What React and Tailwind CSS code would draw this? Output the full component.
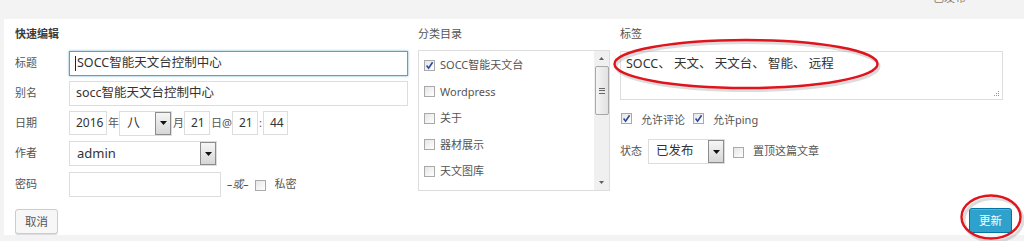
import React from "react"

const FONT = { fontFamily: '"Noto Sans", "Noto Sans CJK SC", sans-serif' }

const Checkbox = ({ checked }) => (
  <span className="relative inline-block w-[11px] h-[11px] shrink-0 border border-[#a9a9a9] bg-gradient-to-br from-[#e6e6e6] to-white">
    {checked && (
      <svg viewBox="0 0 11 11" className="absolute -left-px -top-px w-[11px] h-[11px]">
        <path d="M2.6 5.6 L4.6 8.2 L8.6 2.2" fill="none" stroke="#2b4a9a" strokeWidth="1.6" />
      </svg>
    )}
  </span>
)

const DropBtn = () => (
  <span className="flex items-center justify-center w-[16px] self-stretch border border-[#8c8c8c] bg-gradient-to-b from-[#f6f6f6] to-[#d6d6d6]">
    <svg viewBox="0 0 7 4" className="w-[7px] h-[4px]">
      <path d="M0 0 H7 L3.5 4 Z" fill="#111" />
    </svg>
  </span>
)

const Select = ({ value, className, textClass = "text-[13px]" }) => (
  <div className={`flex h-[25px] border border-[#ddd] bg-white ${className}`}>
    <span className={`flex-1 flex items-center pl-[7px] text-[#333] ${textClass}`}>{value}</span>
    <DropBtn />
  </div>
)

const Input = ({ value, className }) => (
  <div className={`flex items-center h-[24px] border border-[#ddd] bg-white px-[6px] text-[12px] text-[#333] ${className}`}>
    {value}
  </div>
)

const Label = ({ children }) => (
  <span className="w-[54px] shrink-0 text-[11px] text-[#555]">{children}</span>
)

const categories = [
  { name: "SOCC智能天文台", checked: true },
  { name: "Wordpress" },
  { name: "关于" },
  { name: "器材展示" },
  { name: "天文图库" },
]

export default function App() {
  return (
    <div className="relative w-[1024px] h-[241px] overflow-hidden bg-[#f3f3f3]" style={FONT}>
      {/* top strip with cut off status */}
      <div className="h-[19px] relative overflow-hidden">
        <span className="absolute left-[933px] top-[-10px] text-[11px] text-[#8a7a6a]">已发布</span>
      </div>

      <div className="ml-[4px] h-[216px] bg-white flex pl-[11px] pt-[7px]">
        {/* left column */}
        <div className="w-[393px] flex flex-col">
          <div className="h-[16px] leading-[16px] text-[11px] font-bold text-[#3c3c3c]">快速编辑</div>
          <div className="mt-[9px] flex items-center h-[25px]">
            <Label>标题</Label>
            <div className="flex items-center h-[25px] w-[339px] border border-[#5b9dd9] shadow-[0_0_2px_rgba(30,140,190,0.7)] pl-[5px] text-[12.5px] text-[#333]">
              <span className="w-px h-[15px] bg-[#222] mr-px"></span>SOCC智能天文台控制中心
            </div>
          </div>
          <div className="mt-[5px] flex items-center h-[25px]">
            <Label>别名</Label>
            <div className="flex items-center h-[25px] w-[339px] border border-[#ddd] pl-[6px] text-[12.5px] text-[#333]">
              socc智能天文台控制中心
            </div>
          </div>
          <div className="mt-[5px] flex items-center h-[24px] text-[11px] text-[#555] whitespace-nowrap">
            <Label>日期</Label>
            <Input value="2016" className="w-[38px]" />
            <span className="w-[12px] pl-[1px]">年</span>
            <Select value="八" className="w-[53px] h-[24px]" textClass="text-[13px]" />
            <span className="w-[12px] pl-px">月</span>
            <Input value="21" className="w-[26px]" />
            <span className="w-[22px] pl-px">日@</span>
            <Input value="21" className="w-[26px]" />
            <span className="w-[3px] text-center mx-px">:</span>
            <Input value="44" className="w-[25px]" />
          </div>
          <div className="mt-[6px] flex items-center h-[25px]">
            <Label>作者</Label>
            <Select value="admin" className="w-[148px]" textClass="text-[13px]" />
          </div>
          <div className="mt-[6px] flex items-center h-[25px]">
            <Label>密码</Label>
            <div className="h-[25px] w-[152px] border border-[#ddd]"></div>
            <span className="ml-[6px] text-[11px] text-[#555] italic">–或–</span>
            <span className="ml-[6px]"><Checkbox /></span>
            <span className="ml-[9px] text-[11px] text-[#555]">私密</span>
          </div>
          <div className="mt-[11px]">
            <button className="h-[25px] w-[43px] border border-[#ccc] rounded-[3px] bg-[#f7f7f7] shadow-[0_1px_0_#ddd] text-[11.5px] text-[#555]">
              取消
            </button>
          </div>
        </div>

        {/* middle column */}
        <div className="w-[193px] ml-[10px] flex flex-col">
          <div className="h-[16px] leading-[16px] text-[11px] text-[#555]">分类目录</div>
          <div className="mt-[8px] w-[192px] h-[141px] border border-[#ddd] flex">
            <div className="flex-1 pl-[5px] pt-[1px]">
              {categories.map((c) => (
                <div key={c.name} className="h-[26.5px] flex items-center">
                  <Checkbox checked={c.checked} />
                  <span className="ml-[5px] text-[11px] text-[#555]">{c.name}</span>
                </div>
              ))}
            </div>
            <div className="w-[15px] bg-[#f0f0f0] flex flex-col items-center">
              <svg viewBox="0 0 5 3" className="w-[5px] h-[3px] mt-[6px]"><path d="M0 3 L2.5 0 L5 3 Z" fill="#606060" /></svg>
              <div className="mt-[6px] w-[14px] h-[49px] border border-[#a8a8a8] rounded-[2px] bg-gradient-to-r from-[#f4f4f4] to-[#e2e2e2] flex flex-col items-center justify-center gap-[1.5px]">
                <span className="w-[6px] h-px bg-[#666]"></span>
                <span className="w-[6px] h-px bg-[#666]"></span>
                <span className="w-[6px] h-px bg-[#666]"></span>
              </div>
              <div className="flex-1"></div>
              <svg viewBox="0 0 5 3" className="w-[5px] h-[3px] mb-[6px]"><path d="M0 0 L5 0 L2.5 3 Z" fill="#606060" /></svg>
            </div>
          </div>
        </div>

        {/* right column */}
        <div className="ml-[9px] w-[392px] flex flex-col">
          <div className="h-[16px] leading-[16px] text-[11px] text-[#555]">标签</div>
          <div className="mt-[9px] relative w-[383px] h-[49px] border border-[#ddd] px-[5px] pt-[3px] text-[12.5px] text-[#333]">
            SOCC、 天文、 天文台、 智能、 远程
            <svg viewBox="0 0 6 6" className="absolute right-[2px] bottom-[2px] w-[6px] h-[6px]">
              <rect x="4" y="0" width="1" height="1" fill="#999" />
              <rect x="2" y="2" width="1" height="1" fill="#999" />
              <rect x="4" y="2" width="1" height="1" fill="#999" />
              <rect x="0" y="4" width="1" height="1" fill="#999" />
              <rect x="2" y="4" width="1" height="1" fill="#999" />
              <rect x="4" y="4" width="1" height="1" fill="#999" />
            </svg>
          </div>
          <div className="mt-[14px] flex items-center h-[12px] text-[11px] text-[#555]">
            <span className="ml-px"><Checkbox checked /></span>
            <span className="ml-[9px]">允许评论</span>
            <span className="ml-[8px]"><Checkbox checked /></span>
            <span className="ml-[9px]">允许ping</span>
          </div>
          <div className="mt-[13px] flex items-center h-[25px]">
            <span className="w-[28px] text-[11px] text-[#555]">状态</span>
            <Select value="已发布" className="w-[77px]" textClass="text-[12.5px]" />
            <span className="ml-[8px]"><Checkbox /></span>
            <span className="ml-[9px] text-[11px] text-[#555]">置顶这篇文章</span>
          </div>
          <div className="mt-[44px] flex justify-end">
            <button className="h-[25px] w-[43px] rounded-[3px] border border-[#0074a2] bg-[#2ea2cc] shadow-[inset_0_1px_0_rgba(120,200,230,0.5)] text-[11.5px] text-white">
              更新
            </button>
          </div>
        </div>
      </div>

      {/* red annotation ellipses */}
      <svg className="absolute left-0 top-0 w-[1024px] h-[241px] pointer-events-none" viewBox="0 0 1024 241">
        <ellipse cx="746" cy="64.5" rx="131.5" ry="24" fill="none" stroke="#9a9a9a" strokeOpacity="0.35" strokeWidth="3" transform="translate(1.5 2)" />
        <ellipse cx="746" cy="64" rx="131.5" ry="24" fill="none" stroke="#e0141c" strokeWidth="2.4" />
        <ellipse cx="992" cy="218" rx="29.5" ry="21.5" fill="none" stroke="#9a9a9a" strokeOpacity="0.35" strokeWidth="3" transform="translate(1.5 2)" />
        <ellipse cx="991" cy="217" rx="29.5" ry="21.5" fill="none" stroke="#e0141c" strokeWidth="2.4" />
      </svg>
    </div>
  )
}
